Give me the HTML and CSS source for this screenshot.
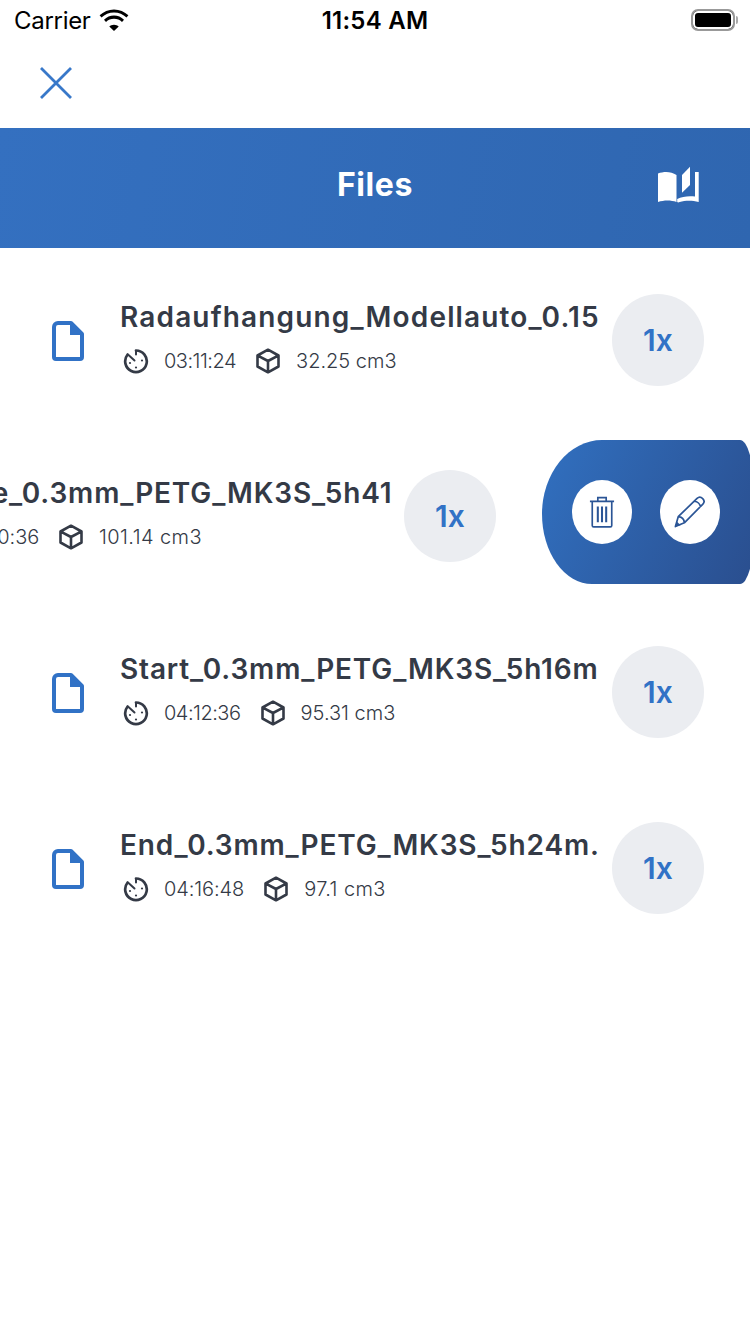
FILE: index.html
```html
<!DOCTYPE html>
<html lang="en">
<head>
<meta charset="utf-8">
<title>Files</title>
<link rel="stylesheet" href="styles.css">
</head>
<body>
<svg class="defs" width="0" height="0" aria-hidden="true">
  <symbol id="file" viewBox="0 0 32 40">
    <path d="M6 2h13l11 11v23a2 2 0 0 1-2 2H4a2 2 0 0 1-2-2V6a4 4 0 0 1 4-4z" fill="none" stroke="currentColor" stroke-width="4" stroke-linejoin="round"/>
    <path d="M18 1h2l11 11v2H18z" fill="currentColor"/>
  </symbol>
  <symbol id="timer" viewBox="0 0 26 26">
    <path d="M13 2.500a10.800 10.800 0 1 1-8.400 4" fill="none" stroke="currentColor" stroke-width="2.700" stroke-linecap="round"/>
    <path d="M13 3v3.500M5.500 7l6 5.500" fill="none" stroke="currentColor" stroke-width="2" stroke-linecap="round"/>
    <circle cx="19" cy="12.500" r="1.100" fill="currentColor"/>
    <circle cx="7" cy="15" r="1.100" fill="currentColor"/>
    <circle cx="13" cy="19.500" r="1.100" fill="currentColor"/>
  </symbol>
  <symbol id="cube" viewBox="0 0 26 26">
    <path d="M13 1.700l10.500 5.800v11L13 24.300 2.500 18.500v-11zM2.800 7.600L13 13l10.200-5.400M13 13v11" fill="none" stroke="currentColor" stroke-width="2.600" stroke-linejoin="round"/>
  </symbol>
</svg>

<div class="screen">
  <div class="status">
    <div class="status-left">
      <span class="carrier">Carrier</span>
      <svg class="wifi" viewBox="0 0 30 22"><path d="M15 3.500c4.800 0 9.200 1.900 12.500 5l1.900-2.200C25.500 2.600 20.500.4 15 .4S4.500 2.600.6 6.300l1.900 2.200c3.300-3.100 7.700-5 12.500-5zM15 9.700c3.100 0 5.900 1.200 8 3.200l2-2.200c-2.700-2.500-6.200-4.100-10-4.100S7.700 8.200 5 10.700l2 2.200c2.100-2 4.900-3.200 8-3.200zM15 15.700c-1.900 0-3.500.700-4.700 1.900L15 22l4.700-4.400c-1.200-1.200-2.800-1.900-4.700-1.900z" fill="#000"/></svg>
    </div>
    <span class="clock">11:54 AM</span>
    <div class="battery"><span class="battery-fill"></span><span class="battery-cap"></span></div>
  </div>

  <div class="topbar">
    <svg class="close" viewBox="0 0 32 32"><path d="M1 1l30 30M31 1L1 31" fill="none" stroke="#3878c9" stroke-width="2.800"/></svg>
  </div>

  <header class="header">
    <h1 class="header-title">Files</h1>
    <svg class="book" viewBox="0 0 41 37"><path d="M0 7.500C6 5.300 13 5.300 18.500 9v27C13 34 6 34 0 36z" fill="#fff"/><path d="M24 9L32 .7V19l-8 7.700z" fill="#fff"/><path d="M37 6h3.700v30c-7-2-14-1.500-19 0l-1.500.4-1-.4v-3c5-2.500 11-3.200 17.800-2.500z" fill="#fff"/></svg>
  </header>

  <main class="list">
    <section class="row">
      <svg class="file-icon"><use href="#file"/></svg>
      <div class="info">
        <div class="name name-long">Radaufhangung_Modellauto_0.15</div>
        <div class="meta">
          <svg class="meta-icon"><use href="#timer"/></svg><span class="meta-text time">03:11:24</span>
          <svg class="meta-icon cube"><use href="#cube"/></svg><span class="meta-text">32.25 cm3</span>
        </div>
      </div>
      <div class="count">1x</div>
    </section>

    <section class="row swiped">
      <svg class="file-icon"><use href="#file"/></svg>
      <div class="info">
        <div class="name">Middle_0.3mm_PETG_MK3S_5h41</div>
        <div class="meta">
          <svg class="meta-icon"><use href="#timer"/></svg><span class="meta-text time-wide">05:50:36</span>
          <svg class="meta-icon cube"><use href="#cube"/></svg><span class="meta-text volume-wide">101.14 cm3</span>
        </div>
      </div>
      <div class="count">1x</div>
      <div class="actions">
        <button class="action">
          <svg class="action-icon" viewBox="0 0 28 34"><path d="M1 5.500h26M9.500 5V1.500h9V5M3.500 6v25.500a1.500 1.500 0 0 0 1.500 1.500h18a1.500 1.500 0 0 0 1.500-1.500V6" fill="none" stroke="#2b5596" stroke-width="1.800"/><path d="M9.500 11v17M14 11v17M18.500 11v17" fill="none" stroke="#2b5596" stroke-width="2.200"/></svg>
        </button>
        <button class="action">
          <svg class="action-icon pencil" viewBox="0 0 34 34"><path d="M1.500 32.500l3-10.500L24.500 2.500c1.800-1.700 4.300-1.500 6 .3s1.800 4.200.2 5.800L11 28.500zM4.500 22c3.500.2 6.200 2.800 6.500 6.500M21.500 5.500c3.400.3 6.200 3 6.700 6.300" fill="none" stroke="#2b5596" stroke-width="1.800" stroke-linejoin="round"/><path d="M1.500 32.500l1.500-5.500 4 4z" fill="#2b5596"/></svg>
        </button>
      </div>
    </section>

    <section class="row">
      <svg class="file-icon"><use href="#file"/></svg>
      <div class="info">
        <div class="name">Start_0.3mm_PETG_MK3S_5h16m</div>
        <div class="meta">
          <svg class="meta-icon"><use href="#timer"/></svg><span class="meta-text time">04:12:36</span>
          <svg class="meta-icon cube"><use href="#cube"/></svg><span class="meta-text">95.31 cm3</span>
        </div>
      </div>
      <div class="count">1x</div>
    </section>

    <section class="row">
      <svg class="file-icon"><use href="#file"/></svg>
      <div class="info">
        <div class="name">End_0.3mm_PETG_MK3S_5h24m.</div>
        <div class="meta">
          <svg class="meta-icon"><use href="#timer"/></svg><span class="meta-text time-wide">04:16:48</span>
          <svg class="meta-icon cube"><use href="#cube"/></svg><span class="meta-text volume-wide">97.1 cm3</span>
        </div>
      </div>
      <div class="count">1x</div>
    </section>
  </main>
</div>
</body>
</html>
```

FILE: styles.css
```css
* { box-sizing: border-box; }
html, body { margin: 0; padding: 0; background: #fff; }
body { width: 750px; height: 1334px; overflow: hidden; font-family: Inter, "Liberation Sans", sans-serif; }
.defs { position: absolute; }
.screen { width: 750px; height: 1334px; overflow: hidden; }

.status { height: 40px; display: flex; align-items: center; padding: 0 12px 0 14px; position: relative; }
.status-left { display: flex; align-items: center; gap: 8px; }
.carrier { font-size: 24px; color: #000; letter-spacing: -0.3px; }
.wifi { width: 30px; height: 22px; }
.clock { position: absolute; left: 0; right: 0; text-align: center; font-size: 24px; font-weight: 600; color: #000; letter-spacing: 0.25px; }
.battery { margin-left: auto; width: 48px; height: 22px; position: relative; }
.battery-fill { position: absolute; left: 1px; top: 0; width: 44px; height: 22px; border: 2px solid #999; border-radius: 7px; background: #000; box-shadow: inset 0 0 0 2px #fff; }
.battery-cap { position: absolute; right: 0; top: 7px; width: 2px; height: 8px; background: #aaa; border-radius: 0 2px 2px 0; }

.topbar { height: 88px; padding: 27px 0 0 40px; }
.close { width: 32px; height: 32px; display: block; }

.header { height: 120px; display: flex; align-items: center; justify-content: center; position: relative; padding-bottom: 8px; background: linear-gradient(100deg, #3470c0, #2f66b0); }
.header-title { margin: 0; font-size: 32px; font-weight: 700; color: #fff; letter-spacing: 0.6px; }
.book { position: absolute; right: 51px; top: 38px; width: 41px; height: 37px; }

.list { padding-top: 4px; }
.row { height: 176px; width: 750px; display: flex; align-items: center; padding-left: 52px; position: relative; }
.swiped { transform: translateX(-208px); }
.file-icon { width: 32px; height: 40px; color: #3172c6; flex: none; margin-top: 1px; }
.info { width: 478px; margin-left: 36px; margin-bottom: 6px; flex: none; }
.name { font-size: 28px; font-weight: 600; color: #343a46; white-space: nowrap; line-height: 34px; letter-spacing: 0.85px; }
.name-long { letter-spacing: 1.15px; }
.meta { display: flex; align-items: center; margin-top: 14px; height: 26px; padding-left: 3px; color: #343a46; }
.meta-icon { width: 26px; height: 26px; flex: none; }
.cube { margin-left: 19px; }
.meta-text { font-size: 20px; font-weight: 300; margin-left: 15px; white-space: nowrap; }
.time { letter-spacing: -0.5px; }
.time-wide { letter-spacing: -0.1px; }
.volume-wide { letter-spacing: 0.4px; }
.count { width: 92px; height: 92px; border-radius: 50%; background: #ebedf1; color: #3172c6; font-size: 30px; font-weight: 600; display: flex; align-items: center; justify-content: center; margin-left: 14px; flex: none; }

.actions { position: absolute; left: 750px; top: 12px; width: 212px; height: 144px; border-radius: 60px 14px 14px 50px / 74px 50px 50px 70px; background: linear-gradient(115deg, #3170c0, #2a4e8e); display: flex; align-items: center; padding-left: 30px; gap: 28px; }
.action { width: 60px; height: 64px; border: 0; border-radius: 50%; background: #fff; padding: 0; display: flex; align-items: center; justify-content: center; flex: none; }
.action-icon { width: 26px; height: 32px; }
.pencil { width: 32px; height: 32px; }
```
